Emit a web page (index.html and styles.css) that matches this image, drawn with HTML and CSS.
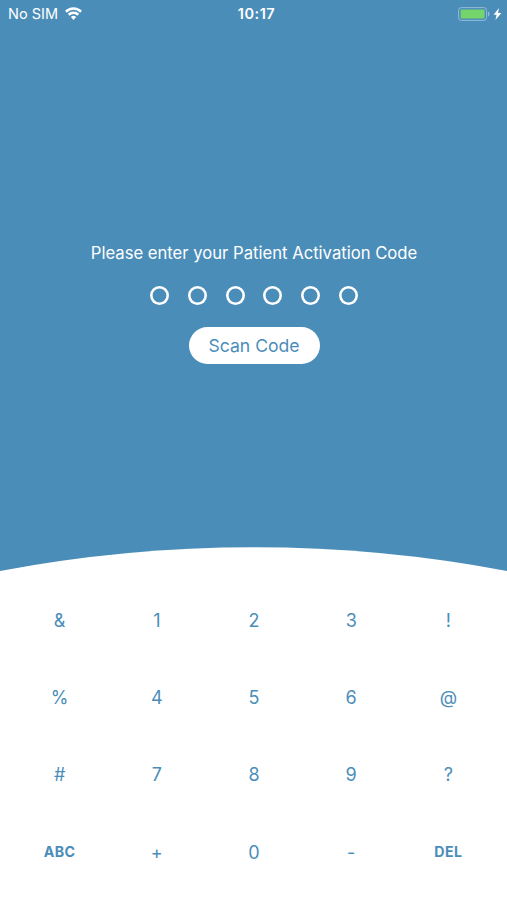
FILE: index.html
```html
<!DOCTYPE html>
<html lang="en">
<head>
    <meta charset="UTF-8">
    <meta name="viewport" content="width=device-width, initial-scale=1.0">
    <title>Patient Activation</title>
    <link rel="stylesheet" href="styles.css">
</head>
<body>
    <!-- Status bar -->
    <header class="status-bar">
        <div class="carrier">
            <span class="carrier-name">No SIM</span>
            <svg class="wifi" width="17" height="13" viewBox="0 0 18 13" preserveAspectRatio="none" fill="none" stroke="#fff" stroke-width="2.6">
                <path d="M1 4.8a11.4 11.4 0 0 1 16 0"/>
                <path d="M3.9 7.8a7.3 7.3 0 0 1 10.2 0"/>
                <path d="M9 13L6.2 10.1a4 4 0 0 1 5.6 0z" fill="#fff" stroke="none"/>
            </svg>
        </div>
        <span class="clock">10:17</span>
        <div class="power">
            <svg width="33" height="14" viewBox="0 0 33 14">
                <rect x=".6" y=".6" width="28" height="12.8" rx="2.8" fill="none" stroke="#93bcd7"/>
                <rect x="2.6" y="2.6" width="24" height="8.8" rx="1" fill="#75d56b"/>
                <path d="M30 4.6a2.6 2.6 0 0 1 0 4.8z" fill="#93bcd7"/>
            </svg>
            <svg width="9" height="14" viewBox="0 0 9 14">
                <path d="M6 1L.6 7.8h3L2.4 13 8.4 6H5z" fill="#fff"/>
            </svg>
        </div>
    </header>

    <!-- Code entry -->
    <main class="entry">
        <h1>Please enter your Patient Activation Code</h1>
        <div class="code">
            <span class="dot"></span>
            <span class="dot"></span>
            <span class="dot"></span>
            <span class="dot"></span>
            <span class="dot"></span>
            <span class="dot"></span>
        </div>
        <button class="scan-btn">Scan Code</button>
    </main>

    <svg class="curve" width="507" height="25" viewBox="0 0 507 25">
        <path d="M0 24Q126 .3 254 .3T507 24V25H0z" fill="#fff"/>
    </svg>

    <!-- Keypad -->
    <section class="keypad">
        <button>&amp;</button>
        <button>1</button>
        <button>2</button>
        <button>3</button>
        <button>!</button>
        <button>%</button>
        <button>4</button>
        <button>5</button>
        <button>6</button>
        <button>@</button>
        <button>#</button>
        <button>7</button>
        <button>8</button>
        <button>9</button>
        <button>?</button>
        <button class="word">ABC</button>
        <button>+</button>
        <button>0</button>
        <button>-</button>
        <button class="word">DEL</button>
    </section>
</body>
</html>
```
FILE: styles.css
```css
* {
    box-sizing: border-box;
}

body {
    margin: 0;
    height: 900px;
    display: flex;
    flex-direction: column;
    overflow: hidden;
    background: #4b8db9;
    color: #fff;
    font-family: Inter, "Liberation Sans", sans-serif;
}

button {
    border: none;
    padding: 0;
    background: none;
    color: #4b8db9;
    font-family: inherit;
    cursor: pointer;
}

/* Status bar */
.status-bar {
    display: grid;
    grid-template-columns: 1fr auto 1fr;
    align-items: center;
    height: 27px;
    padding: 0 5px 0 8px;
    font-size: 14.5px;
}

.carrier,
.power {
    display: flex;
    align-items: center;
}

.carrier {
    gap: 7px;
}

.power {
    justify-content: flex-end;
    gap: 2px;
}

.clock {
    padding-left: 3px;
    font-weight: 600;
    letter-spacing: 0.5px;
}

/* Code entry */
.entry {
    display: flex;
    flex-direction: column;
    align-items: center;
    height: 520px;
    padding: 215px 0 0 1px;
}

h1 {
    margin: 0;
    font-size: 16.65px;
    font-weight: 400;
    line-height: 22px;
}

.code {
    display: flex;
    gap: 18.8px;
    margin: 22px 0;
}

.dot {
    width: 19px;
    height: 19px;
    border-radius: 50%;
    box-shadow: inset 0 0 0 2.6px #fff;
}

.scan-btn {
    width: 131px;
    height: 37px;
    border-radius: 19px;
    background: #fff;
    font-size: 17.6px;
}

.curve {
    display: block;
    flex: none;
}

/* Keypad */
.keypad {
    display: grid;
    grid-template-columns: repeat(5, 97.2px);
    grid-auto-rows: 77.2px;
    justify-content: center;
    flex: 1;
    padding: 10px 0 0 1px;
    background: #fff;
}

.keypad button {
    font-size: 18px;
}

.keypad .word {
    padding-bottom: 2px;
    font-size: 14.2px;
    font-weight: 700;
    letter-spacing: 0.4px;
}
```
